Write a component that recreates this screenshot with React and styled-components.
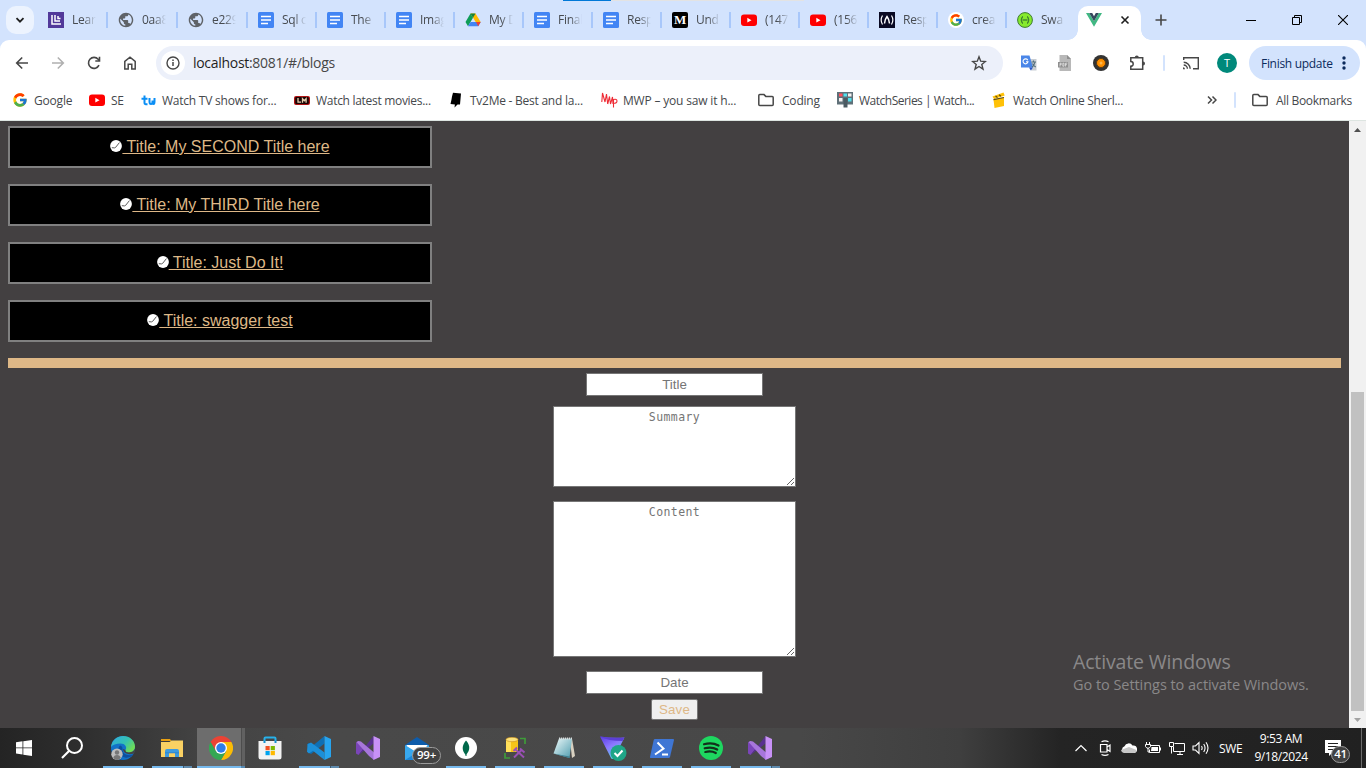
import React from "react";
import styled, { createGlobalStyle, css } from "styled-components";
import { FcGoogle } from "react-icons/fc";

const ui = `"Open Sans", "Noto Sans", sans-serif`;

const GlobalStyle = createGlobalStyle`
  * { box-sizing: border-box; }
  html, body { margin: 0; padding: 0; }
  body { width: 1366px; height: 768px; overflow: hidden; background: #434041; }
  svg { display: block; flex: none; }
`;

const Desktop = styled.div`
  position: relative;
  display: flex;
  flex-direction: column;
  width: 1366px;
  height: 768px;
  overflow: hidden;
  font-family: ${ui};
`;

const Text = styled.span`
  white-space: pre;
  font-size: ${(p) => p.$size || 12}px;
  letter-spacing: ${(p) => p.$ls || 0}px;
  color: ${(p) => p.$color || "inherit"};
`;

/* ---------- tab strip ---------- */

const TabStrip = styled.div`
  display: flex;
  align-items: center;
  height: 40px;
  flex: none;
  background: #d3e3fd;
`;

const EdgeBar = styled.div`
  position: absolute;
  top: 0;
  left: 563px;
  width: 241px;
  height: 1px;
  background: linear-gradient(to right, #0078d7 48px, #e3e3e3 48px);
`;

const TabSearch = styled.div`
  display: flex;
  align-items: center;
  justify-content: center;
  width: 28px;
  height: 28px;
  margin: 0 4px 0 6px;
  border-radius: 10px;
  background: #ecf3fe;
`;

const Tab = styled.div`
  display: flex;
  align-items: center;
  flex: none;
  width: ${(p) => (p.$wide ? 70 : 69)}px;
  height: 16px;
  padding-left: 10px;
  border-right: 2px solid ${(p) => (p.$last ? "transparent" : "#a8c7fa")};
`;

const TabLabel = styled.span`
  width: 24px;
  margin-left: 8px;
  white-space: nowrap;
  font-size: 12px;
  line-height: 18px;
  letter-spacing: -0.25px;
  color: #474b50;
  mask-image: linear-gradient(to right, #000 50%, transparent 100%);
`;

const ActiveTab = styled.div`
  position: relative;
  display: flex;
  align-items: center;
  justify-content: space-between;
  align-self: flex-end;
  width: 63px;
  height: 34px;
  padding: 0 11px 6px 8px;
  margin-left: 2px;
  border-radius: 10px 10px 0 0;
  background: #fff;
  &::before, &::after {
    content: "";
    position: absolute;
    bottom: 0;
    width: 10px;
    height: 10px;
  }
  &::before { left: -10px; background: radial-gradient(circle at 0 0, transparent 9.5px, #fff 10px); }
  &::after { right: -10px; background: radial-gradient(circle at 100% 0, transparent 9.5px, #fff 10px); }
`;

const NewTab = styled.div`
  display: flex;
  margin-left: 14px;
  flex: 1;
`;

const WindowControls = styled.div`
  display: flex;
  gap: 36px;
  margin-right: 18px;
`;

/* ---------- toolbar ---------- */

const Toolbar = styled.div`
  display: flex;
  align-items: center;
  height: 46px;
  flex: none;
  background: #fff;
  border-radius: 9px 9px 0 0;
  padding-right: 6px;
`;

const ToolbarWrap = styled.div`
  background: #d3e3fd;
  flex: none;
`;

const NavButtons = styled.div`
  display: flex;
  gap: 20px;
  padding: 0 18px 0 14px;
`;

const Omnibox = styled.div`
  display: flex;
  align-items: center;
  width: 847px;
  height: 34px;
  padding: 0 16px 0 5px;
  border-radius: 17px;
  background: #ecf0fa;
`;

const SiteInfo = styled.div`
  display: flex;
  align-items: center;
  justify-content: center;
  width: 24px;
  height: 24px;
  margin-right: 8px;
  border-radius: 50%;
  background: #fff;
`;

const Url = styled.span`
  flex: 1;
  padding-bottom: 1px;
  font-size: 14px;
  letter-spacing: -0.3px;
  color: #474747;
  b { font-weight: 400; color: #1f1f1f; }
`;

const Extensions = styled.div`
  display: flex;
  align-items: center;
  gap: 20px;
  margin-left: 18px;
`;

const ExtensionsEnd = styled.div`
  display: flex;
  align-items: center;
  gap: 18px;
  margin-left: -2px;
`;

const Divider = styled.div`
  flex: none;
  width: 2px;
  height: 16px;
  background: #d3e3fd;
  border-radius: 1px;
`;

const Avatar = styled.div`
  width: 20px;
  height: 20px;
  border-radius: 50%;
  background: #00897b;
  color: #fff;
  font-size: 11px;
  line-height: 20px;
  text-align: center;
`;

const UpdatePill = styled.div`
  display: flex;
  align-items: center;
  justify-content: space-between;
  width: 111px;
  height: 34px;
  padding: 0 14px 0 12px;
  margin-left: auto;
  border-radius: 17px;
  background: #d3e3fd;
  color: #0b2a5c;
`;

/* ---------- bookmarks ---------- */

const Bookmarks = styled.div`
  display: flex;
  align-items: center;
  height: 35px;
  flex: none;
  padding: 0 14px 6px 12px;
  background: #fff;
  border-bottom: 1px solid #dde5e1;
  color: #45484c;
`;

const Bookmark = styled.div`
  display: flex;
  align-items: center;
  flex: none;
  gap: ${(p) => p.$gap || 6}px;
  width: ${(p) => (p.$w ? p.$w + "px" : "auto")};
`;

const BookmarksEnd = styled.div`
  display: flex;
  align-items: center;
  margin-left: auto;
`;

/* ---------- page ---------- */

const Viewport = styled.div`
  display: flex;
  height: 607px;
  flex: none;
  background: #434041;
`;

const Page = styled.main`
  width: 1349px;
  padding: 5px 8px 0;
  font-family: "Liberation Sans", Arial, sans-serif;
`;

const BlogList = styled.div`
  display: flex;
  flex-direction: column;
  gap: 16px;
  width: 424px;
`;

const BlogCard = styled.div`
  display: flex;
  justify-content: center;
  align-items: center;
  height: 42px;
  border: 2px solid gray;
  background: #000;
  padding-bottom: 1px;
  svg { margin-bottom: 1px; }
`;

const BlogLink = styled.a`
  white-space: pre;
  font-size: 16px;
  line-height: 18px;
  color: burlywood;
  text-decoration: underline;
`;

const Rule = styled.div`
  height: 10px;
  margin: 16px 0 5px;
  background: burlywood;
`;

const Form = styled.form`
  display: flex;
  flex-direction: column;
  align-items: center;
`;

const field = css`
  border: 1px solid #767676;
  border-radius: 0;
  background: #fff;
  text-align: center;
  outline: none;
  &::placeholder { color: #757575; opacity: 1; }
`;

const TextInput = styled.input`
  ${field}
  width: 177px;
  height: 23px;
  padding: 1px 2px;
  font: 13.333px "Liberation Sans", Arial, sans-serif;
`;

const TextBox = styled.textarea`
  ${field}
  width: 243px;
  height: ${(p) => p.$h}px;
  margin: ${(p) => p.$m};
  padding: 2px;
  font: 11.5px/16px "DejaVu Sans Mono", monospace;
  letter-spacing: 0.4px;
`;

const SaveButton = styled.button`
  width: 47px;
  height: 21px;
  margin-top: 5px;
  padding: 0;
  border: 1px solid #767676;
  border-radius: 2px;
  background: #efefef;
  color: burlywood;
  font: 13.333px/18px "Liberation Sans", Arial, sans-serif;
  letter-spacing: 0.1px;
`;

const Scrollbar = styled.div`
  display: flex;
  flex-direction: column;
  align-items: center;
  width: 17px;
  padding: 7px 0 6px;
  background: #f1f1f1;
`;

const Thumb = styled.div`
  width: 13px;
  height: 319px;
  margin: auto 0 7px;
  background: #c1c1c1;
`;

const Watermark = styled.div`
  position: absolute;
  left: 1073px;
  top: 650px;
  display: flex;
  flex-direction: column;
  color: #8a8889;
`;

const WatermarkLine = styled.div`
  white-space: nowrap;
  font-size: ${(p) => p.$size}px;
  line-height: ${(p) => p.$lh}px;
  letter-spacing: ${(p) => p.$ls}px;
`;

/* ---------- taskbar ---------- */

const Taskbar = styled.div`
  display: flex;
  height: 40px;
  flex: none;
  background: linear-gradient(to right, #242424 0, #2e2e2e 80px, #434343 200px, #494949 330px, #484848 800px, #3f3f3f 960px, #242424 1060px, #212121 1366px);
`;

const TaskCell = styled.div`
  position: relative;
  display: flex;
  align-items: center;
  justify-content: center;
  flex: none;
  width: 48px;
  height: 40px;
`;

const AppCells = styled.div`
  display: flex;
  gap: 1px;
  margin-left: 3px;
`;

const AppCell = styled(TaskCell)`
  background: ${(p) => (p.$active ? "linear-gradient(to right, #6d6d6d 44px, #4d4d4d 44px, #4d4d4d 45px, #616161 45px)" : "none")};
  &::after {
    content: "";
    position: absolute;
    bottom: 0;
    left: ${(p) => (p.$active ? 0 : 4)}px;
    right: ${(p) => (p.$active ? 0 : 4)}px;
    height: 2px;
    background: ${(p) =>
      p.$active
        ? "linear-gradient(to right, #76b9ed 44px, #5789b1 44px)"
        : p.$run === 2
        ? "linear-gradient(to right, #76b9ed 31px, #3f5a70 31px, #3f5a70 32px, #5f8bae 32px)"
        : p.$run === 1
        ? "#76b9ed"
        : "none"};
  }
`;

const CountBadge = styled.span`
  position: absolute;
  left: ${(p) => p.$x}px;
  top: ${(p) => p.$y}px;
  width: ${(p) => p.$w}px;
  height: 17px;
  border: 1px solid #9b9b9b;
  border-radius: 9px;
  background: #424242;
  color: #fff;
  font-size: 11.5px;
  font-weight: 600;
  line-height: 14px;
  letter-spacing: -0.3px;
  text-align: center;
`;

const Tray = styled.div`
  display: flex;
  align-items: center;
  margin-left: auto;
  color: #fff;
`;

const TrayIcon = styled.div`
  display: flex;
  justify-content: center;
  width: 24px;
`;

const Language = styled.div`
  display: flex;
  width: 40px;
  padding-left: 6px;
`;

const Clock = styled.div`
  display: flex;
  flex-direction: column;
  align-items: center;
  width: 56px;
  line-height: 18px;
`;

const ShowDesktop = styled.div`
  width: 5px;
  height: 40px;
  margin-left: 4px;
  border-left: 1px solid #6b6b6b;
`;

/* ---------- icons ---------- */

const Svg = ({ s = 16, w, h, vb, children, ...rest }) => (
  <svg width={w || s} height={h || s} viewBox={vb || `0 0 ${w || s} ${h || s}`} fill="none" {...rest}>
    {children}
  </svg>
);

const LearnIcon = () => (
  <Svg>
    <path fill="#52399a" d="M0 0h16v16H0z" />
    <path d="M4 3v9h9M7 3v6h5M10 4v2.500h2.500" stroke="#fff" strokeWidth="1.500" />
  </Svg>
);
const GlobeIcon = () => (
  <Svg vb="1 1 22 22">
    <path fill="#5f6368" d="M12 2C6.480 2 2 6.480 2 12s4.480 10 10 10 10-4.480 10-10S17.520 2 12 2zm-1 17.930c-3.950-.490-7-3.850-7-7.930 0-.620.080-1.210.210-1.790L9 15v1c0 1.100.900 2 2 2v1.930zm6.900-2.540c-.260-.810-1-1.390-1.900-1.390h-1v-3c0-.550-.450-1-1-1H8v-2h2c.550 0 1-.450 1-1V7h2c1.100 0 2-.900 2-2v-.410c2.930 1.190 5 4.060 5 7.410 0 2.080-.800 3.970-2.100 5.390z" />
  </Svg>
);
const DocIcon = () => (
  <Svg>
    <rect width="16" height="16" rx="1.500" fill="#4285f4" />
    <path d="M3 4.500h10M3 8h10M3 11.500h7" stroke="#fff" strokeWidth="1.600" />
  </Svg>
);
const DriveIcon = () => (
  <Svg>
    <path fill="#ffba00" d="M5.500 1.500h5L15.700 10h-5z" />
    <path fill="#0f9d58" d="M5.500 1.500L8 5.800 3 14.300.500 10z" />
    <path fill="#4285f4" d="M5.600 10H15.700l-2.500 4.300H3z" />
    <path fill="#ea4335" d="M11 10h4.700l-2.500 4.300z" />
    <path fill="#188038" d="M5.500 1.500h5L8 5.800z" />
  </Svg>
);
const MediumIcon = styled.span`
  flex: none;
  width: 16px;
  height: 16px;
  border-radius: 2px;
  overflow: hidden;
  background: #000;
  color: #fff;
  font: 700 13px/16px "Liberation Serif", serif;
  padding-left: 2px;
  letter-spacing: -0.5px;
`;
const YoutubeIcon = () => (
  <Svg>
    <rect y="2.500" width="16" height="11.500" rx="3" fill="#f00" />
    <path fill="#fff" d="M6.300 5.800l4.200 2.400-4.200 2.400z" />
  </Svg>
);
const CampIcon = () => (
  <Svg>
    <path fill="#0a0a23" d="M0 0h16v16H0z" />
    <path d="M3.500 3.500Q.800 8 3.500 12.500M12.500 3.500Q15.200 8 12.500 12.500" stroke="#fff" strokeWidth="1.200" />
    <path d="M5.500 11.500Q6 7 8 4.500Q10 7 10.500 11.500" stroke="#fff" strokeWidth="1.500" />
  </Svg>
);
const GoogleTab = styled.span`
  display: flex;
  flex: none;
  width: 16px;
  height: 16px;
  border-radius: 50%;
  background: #fff;
  align-items: center;
  justify-content: center;
`;
const SwaggerIcon = () => (
  <Svg>
    <circle cx="8" cy="8" r="7.400" fill="#85ea2d" stroke="#3f7c34" strokeWidth="1" />
    <path d="M6 4.500c-1.600 0-.7 3-2.200 3.500 1.500.5.600 3.500 2.200 3.500M10 4.500c1.600 0 .7 3 2.200 3.500-1.500.5-.6 3.500-2.200 3.500M5.500 8h5" stroke="#245a30" strokeWidth="1" />
  </Svg>
);
const VueIcon = () => (
  <Svg>
    <path fill="#41b883" d="M0 1h3.200L8 9.300 12.800 1H16L8 14.800z" />
    <path fill="#35495e" d="M3.200 1h3L8 4.200 9.800 1h3L8 9.300z" />
  </Svg>
);

const FolderIcon = () => (
  <Svg>
    <path d="M.800 3.600q0-1 1-1h4.200l1.800 1.800h6.400q1 0 1 1v7q0 1-1 1H1.800q-1 0-1-1z" stroke="#474747" strokeWidth="1.500" />
  </Svg>
);

const tabs = [
  [LearnIcon, "Learn"],
  [GlobeIcon, "0aa8"],
  [GlobeIcon, "e229"],
  [DocIcon, "Sql c"],
  [DocIcon, "The"],
  [DocIcon, "Imag"],
  [DriveIcon, "My D"],
  [DocIcon, "Final"],
  [DocIcon, "Resp"],
  [() => <MediumIcon>M</MediumIcon>, "Und"],
  [YoutubeIcon, "(147"],
  [YoutubeIcon, "(156"],
  [CampIcon, "Resp"],
  [() => <GoogleTab><FcGoogle size={14} /></GoogleTab>, "crea"],
  [SwaggerIcon, "Swa"],
];

const TvIcon = () => (
  <Svg>
    <path d="M4.500 3.500v7.500q0 1.500 3 1.300M1.500 6.800h6M9.500 6v3.500q0 2.500 1.500 2.500t1.500-2.500V8.500M12.500 9.500q0 2.500 1 2.500t1-2.500V6" stroke="#0a8ef5" strokeWidth="2" />
  </Svg>
);
const LmIcon = () => (
  <Svg>
    <rect y="4" width="16" height="9" rx="2" fill="#b01212" />
    <rect x="1.200" y="5" width="13.600" height="7" rx="1" fill="#1a0505" />
    <path d="M4 6v4.200h3M8.500 10.800V6.800l1.800 2 1.800-2v4" stroke="#e8cfae" strokeWidth="1.300" />
  </Svg>
);
const BoltIcon = () => (
  <Svg>
    <path fill="#000" d="M5 .800l8 .600-1 11H9.500L6.500 15.500l.4-3L2.500 12l1-4.500.5-3z" />
  </Svg>
);
const MwpIcon = () => (
  <Svg w={17} h={16}>
    <path d="M.800 10L1.500 1l2.500 9 1.500-8 1.200 10M6.700 12L8.500 4.500l1 7.500 2-7 .5 7M12.500 15.500v-8q3.500-.8 3.500 1.500t-3.500 2.300" stroke="#ee2b35" strokeWidth="1.100" />
  </Svg>
);
const SeriesIcon = () => (
  <Svg>
    <path fill="#5f7078" d="M0 0h16v12.500H0z" />
    <path fill="#ff4f5d" d="M2 1.500h3.500v3H2z" />
    <path fill="#53e0ee" d="M6.500 1.500h3.500v3H6.500zM11 6h3.500v3.500H11z" />
    <path fill="#f6f1f1" d="M2 6h3.500v3.500H2zM11 1.500h3.500v3H11z" />
    <path fill="#4b5a62" d="M6.500 6h4v9.500h-4z" />
  </Svg>
);
const ClapIcon = () => (
  <Svg>
    <path fill="#ffc107" d="M2.500 7.500L13 5.500V14l-9.500 2zM1.500 4.500L12.500.500l1.200 3L3 7z" />
    <path d="M4.500 4l2 1.500M8 2.700L10 4.300M2.500 7.600L13 5.500" stroke="#5d4a10" strokeWidth="1.100" />
  </Svg>
);

const bookmarks = [
  { icon: <FcGoogle size={16} />, text: "Google", w: 77, ls: -0.2 },
  { icon: <YoutubeIcon />, text: "SE", w: 51, ls: -0.3 },
  { icon: <TvIcon />, text: "Watch TV shows for...", w: 154, ls: -0.23 },
  { icon: <LmIcon />, text: "Watch latest movies...", w: 154, ls: -0.3 },
  { icon: <BoltIcon />, text: "Tv2Me - Best and la...", w: 153, ls: -0.25 },
  { icon: <MwpIcon />, text: "MWP – you saw it h...", w: 157, ls: -0.18, gap: 5 },
  { icon: <FolderIcon />, text: "Coding", w: 79, ls: -0.2, gap: 8 },
  { icon: <SeriesIcon />, text: "WatchSeries | Watch...", w: 154, ls: -0.5 },
  { icon: <ClapIcon />, text: "Watch Online Sherl...", w: 140, ls: -0.3 },
];

const BackIcon = ({ c = "#474747", flip }) => (
  <Svg transform={flip ? "scale(-1 1)" : undefined}>
    <path d="M14 8H3M8.200 2.500L2.700 8l5.500 5.500" stroke={c} strokeWidth="1.600" />
  </Svg>
);
const ReloadIcon = () => (
  <Svg>
    <path d="M13 10.200A5.500 5.500 0 1 1 12.200 4.300L13.500 5.800" stroke="#474747" strokeWidth="1.600" />
    <path d="M13.500 1.800V6H9.300" stroke="#474747" strokeWidth="1.600" />
  </Svg>
);
const HomeIcon = () => (
  <Svg>
    <path d="M2.800 14V6.300L8 2.200l5.200 4.100V14H9.800V9.300H6.200V14z" stroke="#474747" strokeWidth="1.500" />
  </Svg>
);
const StarIcon = () => (
  <Svg>
    <path d="M8 1.800l1.700 4.400 4.700.3-3.600 3 1.200 4.600L8 11.500l-4 2.600 1.200-4.600-3.600-3 4.700-.3z" stroke="#474747" strokeWidth="1.400" />
  </Svg>
);
const TranslateIcon = () => (
  <Svg>
    <path fill="#c8cdd3" d="M6 4h9.500v11.500H10z" />
    <path fill="#4a86e8" d="M0 .500h8.500L12 12.500H0z" />
    <path fill="#2a56c6" d="M8 12.500h4l-2.200 3z" />
    <path d="M6.800 5.300A2.500 2.500 0 1 0 7 6.700H5" stroke="#fff" strokeWidth="1.100" />
    <path d="M10.500 7h4.500M12.500 5.500V7M14 7q-.5 3-3 5M11.500 8.500q1 2.500 3.300 3.500" stroke="#55707c" strokeWidth="1.100" />
  </Svg>
);
const PdfIcon = () => (
  <Svg>
    <path fill="#b8b8b8" d="M2.500 0h7.500l4 4v12H2.500z" />
    <path fill="#8f8f8f" d="M10 0v4h4zM1 7h10v5.500H1z" />
    <path d="M3 11.500V8.200h1.200v1.500H3M5.800 8.200v3h1.200v-3zM8.500 11.500V8.200h1.800M8.500 9.700h1.500" stroke="#eee" strokeWidth=".7" />
  </Svg>
);
const DiscIcon = () => (
  <Svg>
    <circle cx="8" cy="8" r="8" fill="#333" />
    <circle cx="8" cy="8" r="4.500" fill="#ff8f00" stroke="#5c3b11" />
    <circle cx="8" cy="8" r="1.500" fill="#ffb74d" />
  </Svg>
);
const PuzzleIcon = () => (
  <Svg>
    <path d="M1.800 2.800H13.700V14.200H1.800V11.300a2.400 2.400 0 0 0 0-4.800z" stroke="#474747" strokeWidth="1.500" />
    <path fill="#474747" d="M5.800 2.500a2 2 0 0 1 4 0zM14 6.500a2 2 0 0 1 0 4z" />
  </Svg>
);
const CastIcon = () => (
  <Svg>
    <path d="M.700 5V2.700h14.600v11H10M.700 7.300a6.500 6.500 0 0 1 6.500 6.500M.700 10a3.700 3.700 0 0 1 3.700 3.800" stroke="#474747" strokeWidth="1.400" />
    <path fill="#474747" d="M0 12.200a2 2 0 0 1 2 2H0z" />
  </Svg>
);
const Tick = () => (
  <Svg w={12} h={12}>
    <circle cx="6" cy="6" r="5.900" fill="#fff" />
    <path d="M1.800 7.700l2.700.2 1.200-.6 3.700-4.700" stroke="#333" strokeWidth=".8" />
  </Svg>
);

/* taskbar icons */

const EdgeIcon = () => (
  <Svg s={24}>
    <defs>
      <linearGradient id="edgeA" x1="0" y1="0" x2="1" y2=".6">
        <stop offset="0" stopColor="#2fa9e4" /><stop offset=".6" stopColor="#35c1b1" /><stop offset="1" stopColor="#6fdc55" />
      </linearGradient>
    </defs>
    <circle cx="12" cy="12" r="12" fill="#1272c8" />
    <path fill="url(#edgeA)" d="M0 11C1 3.500 6.500 0 12 0c7 0 12 5 12 10.500 0 4-3 6-6 6-2.500 0-4.500-1-3.500-2.500 2-3-.5-6.500-5-6.500C5 7.500 1.500 9 0 11z" />
    <path fill="#0d4f9e" d="M9 9.500C5.500 13 8 20 14 21.500c3.500.8 7-1 8.300-3.200-5 2.200-11.300 0-10.800-5.300.2-1.500-.5-3-2.500-3.500z" />
    <path fill="#444" d="M12 13c0 4 5 6.500 11 4.500l2-5v-3q-1 6.500-7 7-4 0-3.500-2.500z" />
    <circle cx="6" cy="18.300" r="5.700" fill="#bdbdbd" />
    <circle cx="6" cy="16.500" r="2.200" fill="#777" />
    <path fill="#777" d="M2.300 22q.5-3 3.700-3t3.700 3q-1.700 2-3.700 2t-3.700-2z" />
  </Svg>
);
const ExplorerIcon = () => (
  <Svg w={22} h={18}>
    <path fill="#e8a012" d="M0 0h9l1.500 2H0z" />
    <path fill="#fad163" d="M0 3h8.500l2-1.500H22V18H0z" />
    <path fill="#3d9be0" d="M4 18v-6q0-2 2-2h10q2 0 2 2v6h-4v-4H8v4z" />
    <path fill="#2b7cc0" d="M4 13h14v1.500H4z" opacity=".5" />
  </Svg>
);
const ChromeIcon = () => (
  <Svg s={24}>
    <path fill="#ea4335" d="M1.600 6A12 12 0 0 1 22.400 6L12 6.500 6.800 15z" />
    <path fill="#fbbc05" d="M22.400 6A12 12 0 0 1 12 24l5.200-9L12 6z" />
    <path fill="#34a853" d="M12 24A12 12 0 0 1 1.600 6l5.200 9 10.400 0z" />
    <circle cx="12" cy="12" r="6" fill="#fff" />
    <circle cx="12" cy="12" r="4.700" fill="#2f7de9" />
  </Svg>
);
const StoreIcon = () => (
  <Svg w={24} h={24}>
    <path d="M6.500 7V2.500q0-1 1-1h9q1 0 1 1V7" stroke="#27b1ea" strokeWidth="2" />
    <path fill="#f3f3f3" d="M.500 5h23v16q0 2.500-2.500 2.500H3Q.500 23.500.500 21z" />
    <path d="M6.500 7V4.800M17.500 7V4.800" stroke="#1590cc" strokeWidth="2" />
    <path fill="#f25022" d="M7.500 10h4.200v4.200H7.500z" />
    <path fill="#7fba00" d="M12.700 10h4.200v4.200h-4.200z" />
    <path fill="#00a4ef" d="M7.500 15h4.200v4.200H7.500z" />
    <path fill="#ffb900" d="M12.700 15h4.200v4.200h-4.200z" />
  </Svg>
);
const CodeIcon = () => (
  <Svg s={24}>
    <path fill="#0f6fb3" d="M0 8.500L2 6.800l4 2.800L17.500 0v7.500L4 18 0 15.800l3.500-3.500z" />
    <path fill="#1c8fd8" d="M0 15.800L2 17.500l4-2.800L17.500 24v-7.500L4 6.500.500 8.500z" />
    <path fill="#27a4ee" d="M17.500 0L24 3v18l-6.500 3z" />
  </Svg>
);
const StudioIcon = () => (
  <Svg s={24}>
    <path fill="#7a45b8" d="M0 6.500L2.500 5l5 6V13l-5 6L0 17.500z" />
    <path fill="#593091" d="M2.500 19L17.500 0v7.500z" />
    <path fill="#a776db" d="M2.500 5L5 5.500 18 16.500V24L13 20 .500 6z" />
    <path fill="#c891f7" d="M17.500 0L24 3v18l-6.500 3z" />
  </Svg>
);
const MailIcon = () => (
  <Svg w={24} h={23}>
    <path fill="#0d5cab" d="M0 8L12 0l12 8v4H0z" />
    <path fill="#fff" d="M1.500 8h21v4L12 17 1.500 12z" />
    <path fill="#38a8ee" d="M0 8l12 7.500L24 8v15H0z" />
    <path fill="#1c86d8" d="M0 23l12-7.500L24 23z" />
  </Svg>
);
const MongoIcon = () => (
  <Svg s={22}>
    <circle cx="11" cy="11" r="11" fill="#fff" />
    <path fill="#00684a" d="M11 3.500c4.500 5 4.300 10-.2 14.500C6.500 13.500 6.800 8.500 11 3.500z" />
    <path d="M11 14v5" stroke="#00684a" />
  </Svg>
);
const DbIcon = () => (
  <Svg s={22}>
    <path fill="#f5c518" d="M2 2h12v13H2z" />
    <path fill="#ffdf5a" d="M2 2h5v13H2z" />
    <ellipse cx="8" cy="2.500" rx="6" ry="2.200" fill="#fbe27c" stroke="#c98d17" strokeWidth=".6" />
    <path d="M16 1.500h5V7M1 16v5h5" stroke="#3f9c3a" strokeWidth="1.700" />
    <path d="M10 20.500l8-8M11 12l9 8.500M9.500 14l3.500-3.500M16 11.500l4.500 4" stroke="#9a4fb5" strokeWidth="1.900" />
  </Svg>
);
const NotepadIcon = () => (
  <Svg s={22}>
    <defs>
      <linearGradient id="padA" x1="0" y1="0" x2="1" y2="1">
        <stop offset="0" stopColor="#eefafa" /><stop offset="1" stopColor="#4e9cae" />
      </linearGradient>
    </defs>
    <path fill="#d8d0c0" d="M19 1.500L22 19l-3 2L17 4z" />
    <path fill="url(#padA)" d="M6 1.500h13L16.500 21 .500 16.500z" />
    <path d="M6 1.500h13" stroke="#d9dede" strokeWidth="1.800" strokeDasharray="1.200 .8" />
    <path fill="#3d7f90" d="M.500 16.500l16 3V21z" />
  </Svg>
);
const FilterIcon = () => (
  <Svg w={27} h={25}>
    <defs>
      <linearGradient id="fltA" x1="0" y1="0" x2=".6" y2="1">
        <stop offset="0" stopColor="#5a3ce0" /><stop offset=".5" stopColor="#8c78ff" /><stop offset="1" stopColor="#55d5e8" />
      </linearGradient>
    </defs>
    <path fill="url(#fltA)" d="M0 .500q12 2 24.500 1L14 22q-2 2-3 0z" />
    <path fill="#5b3fd6" d="M0 .500q12 2 24.500 1l-2 3.500Q8 5 0 .500z" />
    <circle cx="18.500" cy="17" r="8" fill="#1fa587" />
    <path d="M14.500 17l3 3 5-5.500" stroke="#fff" strokeWidth="2" />
  </Svg>
);
const ShellIcon = () => (
  <Svg w={24} h={19}>
    <path fill="#3f76d4" d="M5 0h18q1.200 0 1 1L20 18q-.3 1-1.300 1H1Q-.200 19 0 18L3.700 1Q4 0 5 0z" />
    <path d="M7.500 3.500l6 6L5 15.500M12 15.500h6" stroke="#fff" strokeWidth="2" />
  </Svg>
);
const SpotifyIcon = () => (
  <Svg s={24}>
    <circle cx="12" cy="12" r="12" fill="#1ed760" />
    <path d="M5 8.300q8-2.300 14.500 1.200M5.700 12.300q7-2 12.500 1.200M6.300 16q6-1.500 10.500 1" stroke="#12301c" strokeWidth="2.200" strokeLinecap="round" />
  </Svg>
);

const apps = [
  { icon: <EdgeIcon />, run: 1 },
  { icon: <ExplorerIcon />, run: 2 },
  { icon: <ChromeIcon />, active: true },
  { icon: <StoreIcon /> },
  { icon: <CodeIcon />, run: 2 },
  { icon: <StudioIcon /> },
  { icon: <MailIcon />, badge: "99+" },
  { icon: <MongoIcon />, run: 1 },
  { icon: <DbIcon />, run: 1 },
  { icon: <NotepadIcon />, run: 1 },
  { icon: <FilterIcon />, run: 1 },
  { icon: <ShellIcon />, run: 1 },
  { icon: <SpotifyIcon />, run: 1 },
  { icon: <StudioIcon />, run: 2 },
];

const trayIcons = [
  <Svg key="up"><path d="M2.500 11L8 5.500l5.500 5.500" stroke="#fff" strokeWidth="1.200" /></Svg>,
  <Svg key="meet"><path d="M4.500 1.700q3.500-1.700 7 0M4.500 14.500q3.500 1.700 7 0M3.500 4.500h6.500v7.500h-6.500zM10 7l3-2v6.500l-3-2" stroke="#fff" strokeWidth="1.200" /></Svg>,
  <Svg key="cloud"><path fill="#fff" d="M4 13a3.500 3.500 0 0 1-.5-6.800A4.500 4.500 0 0 1 11.500 5.500 3.800 3.800 0 0 1 13 13z" /><path fill="#c6c6c6" d="M4 13q-3.500 0-4-3l8-3 7.500 3q0 3-3 3z" /></Svg>,
  <Svg key="battery"><path d="M5.500 5.500h9v7h-10V9.500M15.500 7.500v3M1.500 2v2.500M4.500 2v2.500M.500 4.500h5v2q-1 1.800-2.500 1.800T.500 6.500zM3 8v4h1.500" stroke="#fff" /><path fill="#fff" d="M6.500 7H13v4H6z" /></Svg>,
  <Svg key="net"><path d="M5.500 3.500h10v8h-11V7M8 14.500h6M11 11.500v3M.500 2.500h4v4h-4zM2.500 6.500v7" stroke="#fff" /></Svg>,
  <Svg key="sound" w={18}><path d="M1 6h2.500L7 2.500v11L3.500 10H1zM9.500 6q1.300 2 0 4M11.700 4q2.700 4 0 8M14 2.300q4 5.700 0 11.400" stroke="#fff" strokeWidth="1.100" /></Svg>,
];

const posts = ["My SECOND Title here", "My THIRD Title here", "Just Do It!", "swagger test"];

export default function App() {
  return (
    <Desktop>
      <GlobalStyle />
      <TabStrip>
        <TabSearch>
          <Svg s={10}><path d="M1.500 3.200L5 6.700l3.500-3.500" stroke="#1f1f1f" strokeWidth="1.800" /></Svg>
        </TabSearch>
        {tabs.map(([Icon, label], i) => (
          <Tab key={i} $wide={i < 3} $last={i === tabs.length - 1}>
            <Icon />
            <TabLabel>{label}</TabLabel>
          </Tab>
        ))}
        <ActiveTab>
          <VueIcon />
          <Svg s={10}><path d="M1.500 1.500l7 7M8.500 1.500l-7 7" stroke="#1f1f1f" strokeWidth="1.600" /></Svg>
        </ActiveTab>
        <NewTab>
          <Svg s={12}><path d="M6 .500v11M.500 6h11" stroke="#474747" strokeWidth="1.600" /></Svg>
        </NewTab>
        <WindowControls>
          <Svg s={10}><path d="M0 5.500h10" stroke="#000" /></Svg>
          <Svg s={10}><path d="M.500 2.500h7v7h-7zM2.500 2.500v-2h7v7h-2" stroke="#000" /></Svg>
          <Svg s={10}><path d="M0 0l10 10M10 0L0 10" stroke="#000" strokeWidth="1.100" /></Svg>
        </WindowControls>
      </TabStrip>
      <EdgeBar />

      <ToolbarWrap>
        <Toolbar>
          <NavButtons>
            <BackIcon />
            <BackIcon c="#b0b0b0" flip />
            <ReloadIcon />
            <HomeIcon />
          </NavButtons>
          <Omnibox>
            <SiteInfo>
              <Svg s={14}><circle cx="7" cy="7" r="6" stroke="#474747" strokeWidth="1.400" /><path d="M7 6v4M7 3.500v1.500" stroke="#474747" strokeWidth="1.500" /></Svg>
            </SiteInfo>
            <Url><b>localhost</b>:8081/#/blogs</Url>
            <StarIcon />
          </Omnibox>
          <Extensions>
            <TranslateIcon />
            <PdfIcon />
            <DiscIcon />
            <PuzzleIcon />
            <ExtensionsEnd>
              <Divider />
              <CastIcon />
              <Avatar>T</Avatar>
            </ExtensionsEnd>
          </Extensions>
          <UpdatePill>
            <Text $ls={-0.3}>Finish update</Text>
            <Svg w={4} h={14}><g fill="#0b2a5c"><circle cx="2" cy="2" r="1.700" /><circle cx="2" cy="7" r="1.700" /><circle cx="2" cy="12" r="1.700" /></g></Svg>
          </UpdatePill>
        </Toolbar>
      </ToolbarWrap>

      <Bookmarks>
        {bookmarks.map((b) => (
          <Bookmark key={b.text} $w={b.w} $gap={b.gap}>
            {b.icon}
            <Text $ls={b.ls}>{b.text}</Text>
          </Bookmark>
        ))}
        <BookmarksEnd>
          <Bookmark $w={27}>
            <Svg s={10}><path d="M1 1.500L4.500 5 1 8.500M5.500 1.500L9 5 5.500 8.500" stroke="#474747" strokeWidth="1.500" /></Svg>
          </Bookmark>
          <Bookmark $w={18}><Divider /></Bookmark>
          <Bookmark $gap={8}>
            <FolderIcon />
            <Text $ls={-0.3}>All Bookmarks</Text>
          </Bookmark>
        </BookmarksEnd>
      </Bookmarks>

      <Viewport>
        <Page>
          <BlogList>
            {posts.map((p) => (
              <BlogCard key={p}>
                <Tick />
                <BlogLink> Title: {p}</BlogLink>
              </BlogCard>
            ))}
          </BlogList>
          <Rule />
          <Form>
            <TextInput placeholder="Title" />
            <TextBox placeholder="Summary" $h={81} $m="10px 0 0" />
            <TextBox placeholder="Content" $h={156} $m="14px 0 14px" />
            <TextInput placeholder="Date" />
            <SaveButton type="button">Save</SaveButton>
          </Form>
        </Page>
        <Scrollbar>
          <Svg w={7} h={4}><path fill="#505050" d="M0 4l3.500-4L7 4z" /></Svg>
          <Thumb />
          <Svg w={7} h={4}><path fill="#a3a3a3" d="M0 0l3.500 4L7 0z" /></Svg>
        </Scrollbar>
      </Viewport>

      <Watermark>
        <WatermarkLine $size={19.5} $lh={24} $ls={-0.15}>Activate Windows</WatermarkLine>
        <WatermarkLine $size={14.5} $lh={22} $ls={-0.05}>Go to Settings to activate Windows.</WatermarkLine>
      </Watermark>

      <Taskbar>
        <TaskCell>
          <Svg><path fill="#fff" d="M0 2.300L6.500 1.300v6.200H0zM7.300 1.200L16 0v7.500H7.300zM0 8.300h6.500v6.200L0 13.600zM7.300 8.300H16V16l-8.700-1.300z" /></Svg>
        </TaskCell>
        <TaskCell>
          <Svg s={22}><circle cx="13.500" cy="8.500" r="7.500" stroke="#fff" strokeWidth="2" /><path d="M8 14l-7 7" stroke="#fff" strokeWidth="2.200" /></Svg>
        </TaskCell>
        <AppCells>
          {apps.map((a, i) => (
            <AppCell key={i} $run={a.run} $active={a.active}>
              {a.icon}
              {a.badge && <CountBadge $x={19} $y={19} $w={29}>{a.badge}</CountBadge>}
            </AppCell>
          ))}
        </AppCells>
        <Tray>
          {trayIcons.map((icon) => (
            <TrayIcon key={icon.key}>{icon}</TrayIcon>
          ))}
          <Language><Text $ls={-0.3}>SWE</Text></Language>
          <Clock>
            <Text $ls={-0.4}>9:53 AM</Text>
            <Text $ls={-0.4}>9/18/2024</Text>
          </Clock>
          <TaskCell>
            <Svg><path fill="#fff" d="M0 0h16v13H7l-3 3v-3H0z" /><path d="M3 3.500h10M3 6.500h10M3 9.500h7" stroke="#222" /></Svg>
            <CountBadge $x={22} $y={18} $w={19}>41</CountBadge>
          </TaskCell>
          <ShowDesktop />
        </Tray>
      </Taskbar>
    </Desktop>
  );
}
